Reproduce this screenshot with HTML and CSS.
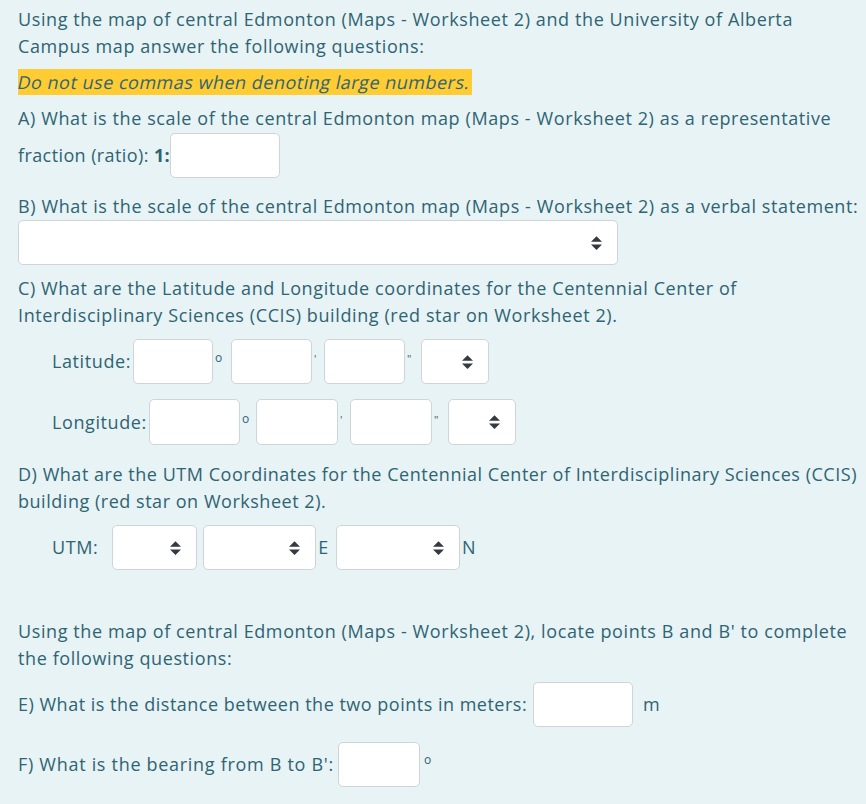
FILE: index.html
```html
<!DOCTYPE html>
<html>
<head>
<meta charset="utf-8">
<link rel="stylesheet" href="styles.css">
</head>
<body>
<div class="q">
  <p class="txt intro">Using the map of central Edmonton (Maps - Worksheet 2) and the University of Alberta<br>Campus map answer the following questions:</p>
  <p class="note"><span class="hl"><span class="sk">Do not use commas when denoting large numbers.</span></span></p>

  <p class="txt qa">A) What is the scale of the central Edmonton map (Maps - Worksheet 2) as a representative</p>
  <div class="row ra"><span class="frac">fraction (ratio): <b>1:</b></span><input class="inp w110" type="text"></div>

  <p class="txt qb">B) What is the scale of the central Edmonton map (Maps - Worksheet 2) as a verbal statement:</p>
  <div class="sel wide"><svg class="arr" viewBox="0 0 4 5"><path d="M2 0L0 2h4zm0 5L0 3h4z"/></svg></div>

  <p class="txt qc">C) What are the Latitude and Longitude coordinates for the Centennial Center of<br>Interdisciplinary Sciences (CCIS) building (red star on Worksheet 2).</p>

  <div class="row ind lat">
    <span class="lbl">Latitude:</span>
    <input class="inp w80" type="text"><span class="u u18"><span class="deg">o</span></span>
    <input class="inp w81" type="text"><span class="u u12"><span class="tick">'</span></span>
    <input class="inp w81" type="text"><span class="u u16"><span class="tick">"</span></span>
    <div class="sel w68"><svg class="arr" viewBox="0 0 4 5"><path d="M2 0L0 2h4zm0 5L0 3h4z"/></svg></div>
  </div>

  <div class="row ind lon">
    <span class="lbl">Longitude:</span>
    <input class="inp w91" type="text"><span class="u u16"><span class="deg">o</span></span>
    <input class="inp w82" type="text"><span class="u u12"><span class="tick">'</span></span>
    <input class="inp w82" type="text"><span class="u u16"><span class="tick">"</span></span>
    <div class="sel w68"><svg class="arr" viewBox="0 0 4 5"><path d="M2 0L0 2h4zm0 5L0 3h4z"/></svg></div>
  </div>

  <p class="txt qd">D) What are the UTM Coordinates for the Centennial Center of Interdisciplinary Sciences (CCIS)<br>building (red star on Worksheet 2).</p>

  <div class="row ind utm">
    <span class="lbl lutm">UTM:</span>
    <div class="sel w85"><svg class="arr" viewBox="0 0 4 5"><path d="M2 0L0 2h4zm0 5L0 3h4z"/></svg></div>
    <div class="sel w113 s2"><svg class="arr" viewBox="0 0 4 5"><path d="M2 0L0 2h4zm0 5L0 3h4z"/></svg></div>
    <span class="en e">E</span>
    <div class="sel w124"><svg class="arr" viewBox="0 0 4 5"><path d="M2 0L0 2h4zm0 5L0 3h4z"/></svg></div>
    <span class="en">N</span>
  </div>

  <p class="txt qe">Using the map of central Edmonton (Maps - Worksheet 2), locate points B and B' to complete<br>the following questions:</p>

  <div class="row re"><span class="etx">E) What is the distance between the two points in meters:</span><input class="inp w100 ie" type="text"><span class="m">m</span></div>

  <div class="row rf"><span class="ftx">F) What is the bearing from B to B':</span><input class="inp w82 if" type="text"><span class="deg fdeg">o</span></div>
</div>
</body>
</html>
```

FILE: styles.css
```css
html, body {
  margin: 0;
  padding: 0;
  background: #e7f3f5;
}
body {
  font-family: "Open Sans", "Noto Sans", sans-serif;
  font-size: 18px;
  line-height: 27px;
  letter-spacing: 0.6px;
  color: #2f6473;
  width: 866px;
  height: 804px;
  overflow: hidden;
}
.q {
  padding: 6px 8px 0 18px;
}
.txt {
  margin: 0;
  white-space: nowrap;
}
.qd { letter-spacing: 0.53px; }
.note {
  margin: 9px 0 0;
  line-height: 26px;
  height: 26px;
}
.hl {
  display: inline-block;
  background: #ffcc33;
  padding-right: 2px;
  letter-spacing: 0.5px;
}
.sk {
  display: inline-block;
  transform: skewX(-12deg);
}
.qa { margin-top: 10px; }
.row {
  display: flex;
  align-items: center;
  height: 45px;
  white-space: nowrap;
}
.ra { margin-top: 1px; }
.frac { letter-spacing: 0.4px; }
.qb { margin-top: 15px; }
.qc { margin-top: 10px; }
.lat { margin-top: 10px; }
.lon { margin-top: 15px; height: 46px; }
.qd { margin-top: 16px; }
.utm { margin-top: 10px; }
.qe { margin-top: 48px; }
.re { margin-top: 10px; }
.rf { margin-top: 15px; }
.etx { letter-spacing: 0.5px; }
.ftx { letter-spacing: 0.7px; }

.ind { padding-left: 34px; }
.lbl { margin-right: 2px; }
.lutm { margin-right: 14px; }

.inp {
  box-sizing: border-box;
  height: 45px;
  margin: 0;
  padding: 0 12px;
  border: 1px solid #ced4da;
  border-radius: 5px;
  background: #fff;
  font: inherit;
  color: #495057;
  outline: none;
}
.lon .inp { height: 46px; }
.sel {
  box-sizing: border-box;
  height: 45px;
  border: 1px solid #ced4da;
  border-radius: 5px;
  background: #fff;
  display: flex;
  align-items: center;
  justify-content: flex-end;
  padding-right: 15px;
}
.lon .sel { height: 46px; }
.arr {
  width: 11px;
  height: 14px;
  fill: #343a40;
}
.wide { width: 600px; }
.w68 { width: 68px; }
.w80 { width: 80px; }
.w81 { width: 81px; }
.w82 { width: 82px; }
.w85 { width: 85px; }
.w91 { width: 91px; }
.w100 { width: 100px; }
.w110 { width: 110px; }
.w113 { width: 113px; }
.w124 { width: 124px; }

.u {
  display: flex;
  align-self: stretch;
  align-items: center;
  padding-left: 2px;
  box-sizing: border-box;
}
.u12 { width: 12px; }
.u16 { width: 16px; }
.u18 { width: 18px; }
.deg {
  font-size: 12px;
  line-height: 1;
  margin-bottom: 7px;
}
.tick {
  font-size: 11px;
  line-height: 1;
  margin-bottom: 6px;
}
.s2 { margin-left: 6px; }
.en { margin: 0 7px 0 2px; }
.ie { margin-left: 6px; }
.m { margin-left: 10px; }
.if { margin-left: 4px; }
.fdeg { margin-left: 4px; margin-bottom: 10px; }
```
